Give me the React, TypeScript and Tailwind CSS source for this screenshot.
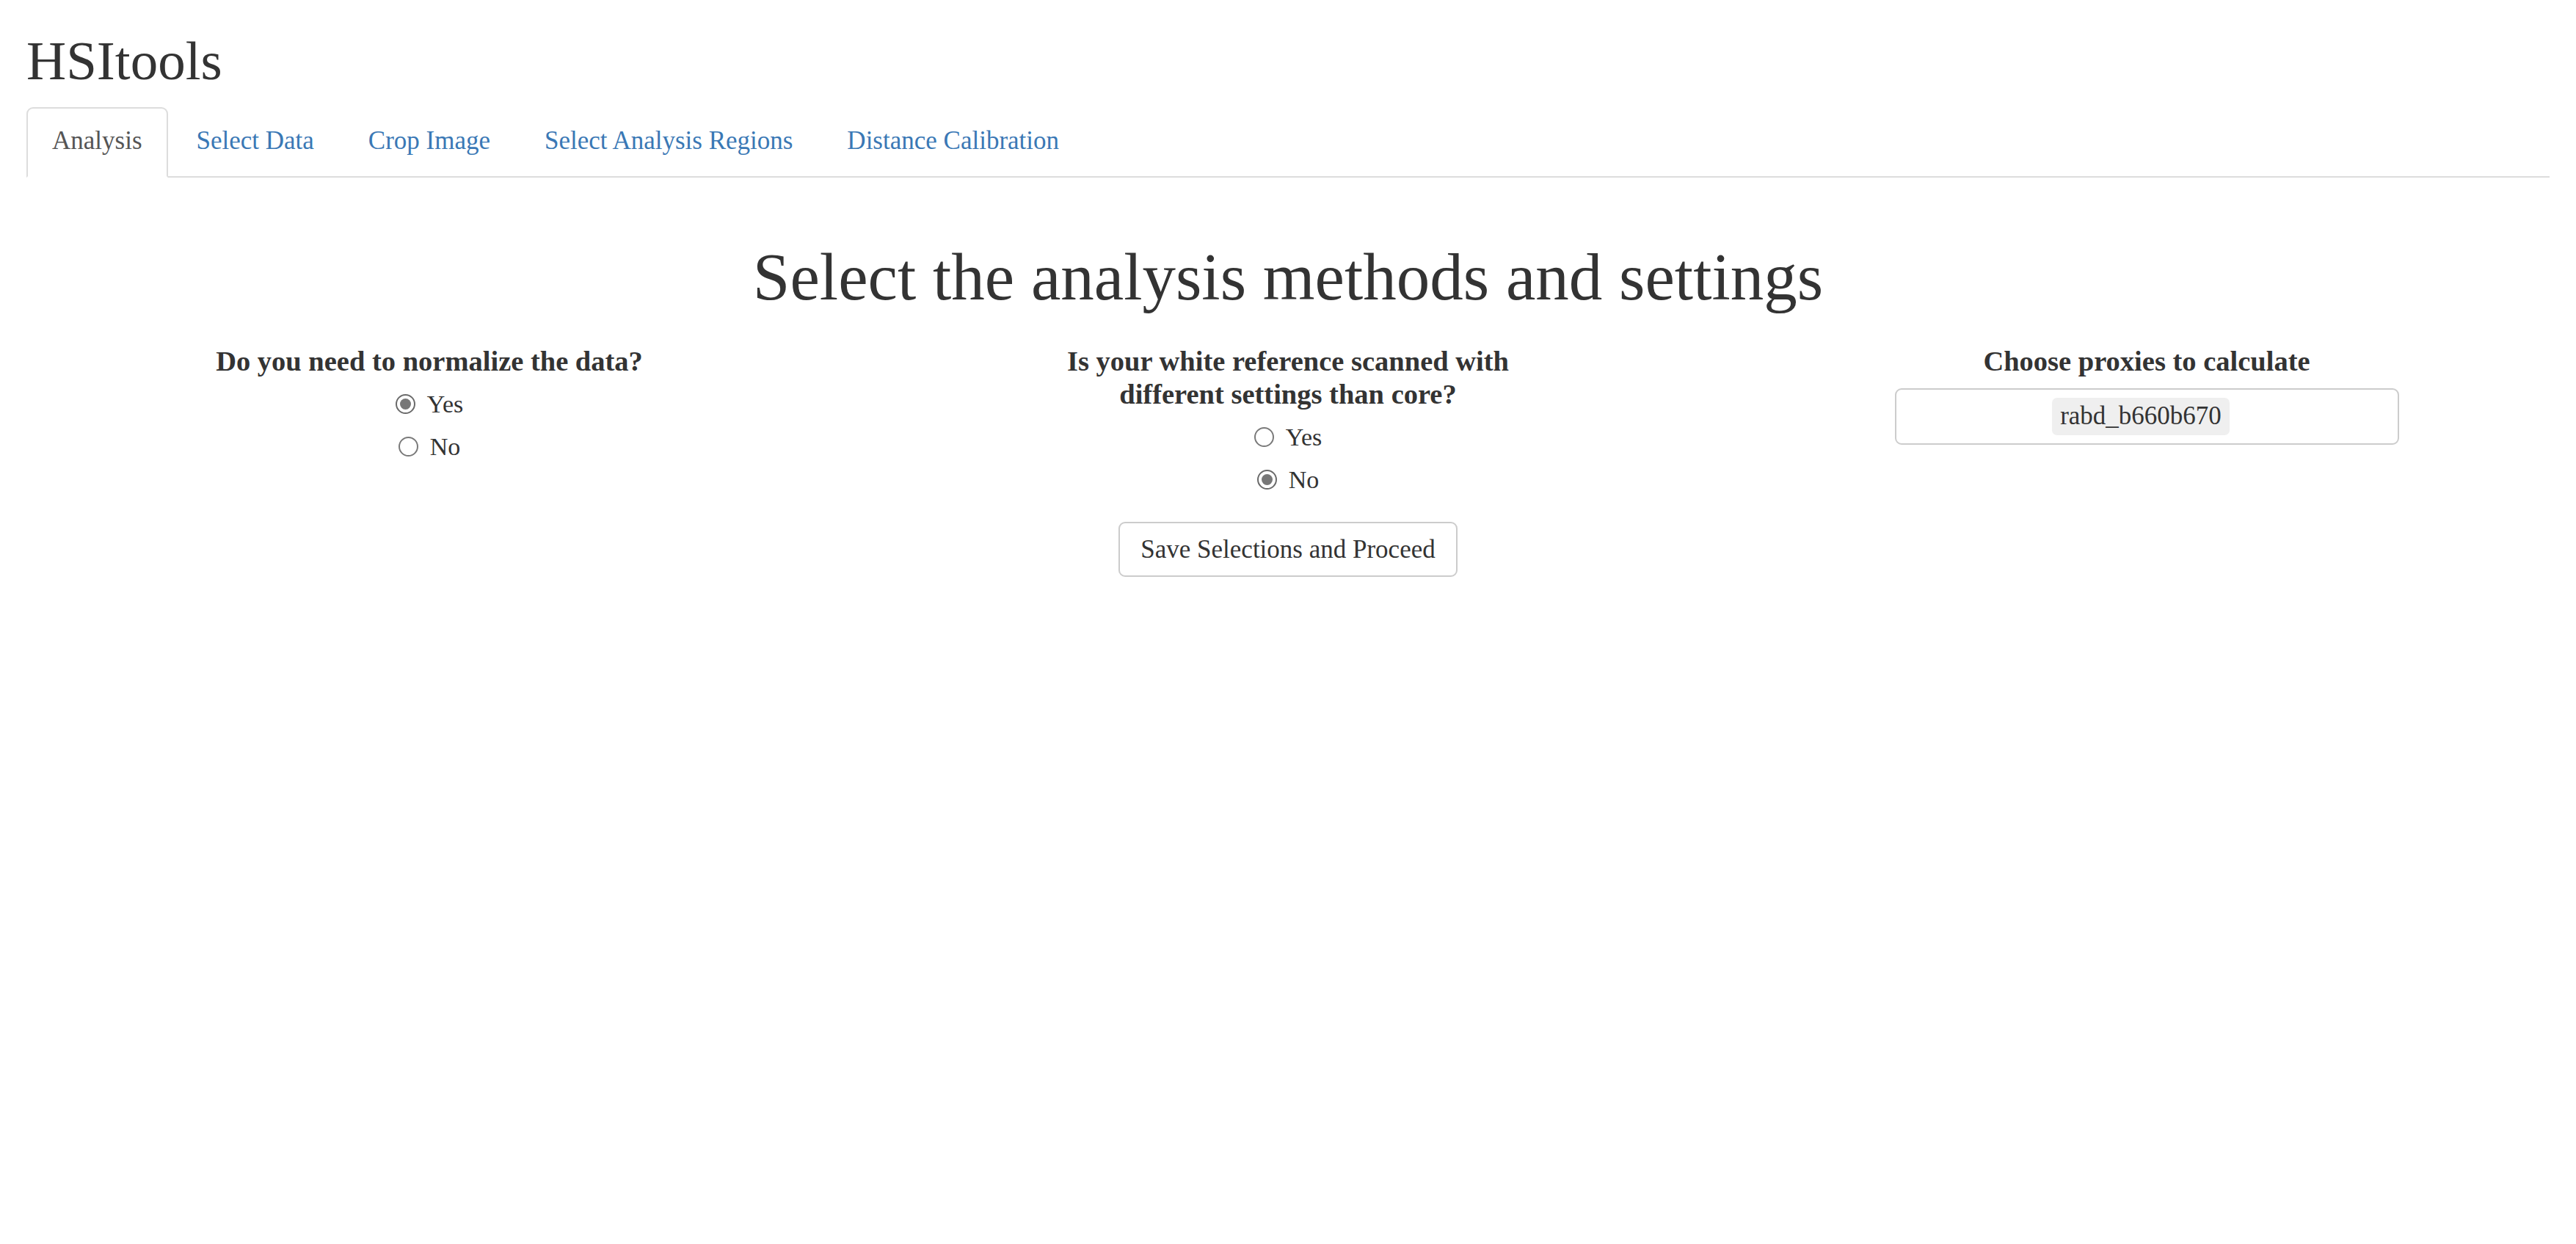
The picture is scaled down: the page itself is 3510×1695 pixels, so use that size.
import { useState } from "react";

const tabs = ["Analysis", "Select Data", "Crop Image", "Select Analysis Regions", "Distance Calibration"];

function Radio({ label, checked, onClick }: { label: string; checked: boolean; onClick: () => void }) {
  return (
    <div className="flex h-[45px] items-center justify-center gap-[16px] cursor-pointer" onClick={onClick}>
      <span
        className={
          "flex h-[27px] w-[27px] items-center justify-center rounded-full border-2 bg-white " +
          (checked ? "border-[#6a6a6a]" : "border-[#7a7a7a]")
        }
      >
        {checked && <span className="h-[15px] w-[15px] rounded-full bg-[#777777]" />}
      </span>
      <span className="text-[34px] leading-[45px]">{label}</span>
    </div>
  );
}

function RadioGroup({ value, setValue }: { value: string; setValue: (v: string) => void }) {
  return (
    <div className="mt-[13px] flex flex-col gap-[13px]">
      <Radio label="Yes" checked={value === "Yes"} onClick={() => setValue("Yes")} />
      <Radio label="No" checked={value === "No"} onClick={() => setValue("No")} />
    </div>
  );
}

export default function App() {
  const [tab, setTab] = useState("Analysis");
  const [normalize, setNormalize] = useState("Yes");
  const [whiteRef, setWhiteRef] = useState("No");

  return (
    <div className="min-h-screen bg-white px-[36px] font-['Liberation_Serif','Times_New_Roman',serif] text-[#333333]">
      <h2 className="mt-[42px] mb-[22px] text-[75px] leading-[82px] font-normal">HSItools</h2>

      {/* tabs */}
      <ul className="flex border-b-2 border-[#dddddd]">
        {tabs.map((t) => (
          <li key={t} className="-mb-[2px] mr-[4px]">
            <a
              href="#"
              onClick={(e) => {
                e.preventDefault();
                setTab(t);
              }}
              className={
                "block rounded-t-[9px] border-2 px-[33px] pt-[20px] pb-[24px] text-[35px] leading-[48px] " +
                (tab === t
                  ? "border-[#dddddd] border-b-white bg-white text-[#555555]"
                  : "border-transparent text-[#3a78b5]")
              }
            >
              {t}
            </a>
          </li>
        ))}
      </ul>

      <div className="-mx-[36px]">
        <h1 className="mt-[86px] text-center text-[91px] leading-[100px] font-normal">
          Select the analysis methods and settings
        </h1>

        <div className="mt-[42px] grid grid-cols-3">
          {/* column 1 */}
          <div className="flex flex-col items-center">
            <label className="text-center text-[38.5px] leading-[45px] font-bold">Do you need to normalize the data?</label>
            <RadioGroup value={normalize} setValue={setNormalize} />
          </div>

          {/* column 2 */}
          <div className="flex flex-col items-center">
            <label className="text-center text-[38.5px] leading-[45px] font-bold">
              Is your white reference scanned with
              <br />
              different settings than core?
            </label>
            <RadioGroup value={whiteRef} setValue={setWhiteRef} />
            <button className="mt-[35px] h-[75px] rounded-[9px] border-2 border-[#cccccc] bg-white px-[28px] text-[35px] leading-[45px] text-[#333333]">
              Save Selections and Proceed
            </button>
          </div>

          {/* column 3 */}
          <div className="flex flex-col items-center">
            <label className="text-center text-[38.5px] leading-[45px] font-bold">Choose proxies to calculate</label>
            <div className="mt-[14px] flex h-[77px] w-[687px] items-center justify-center rounded-[9px] border-2 border-[#cccccc] bg-white pr-[16px]">
              <span className="flex h-[51px] items-center rounded-[7px] bg-[#efefef] px-[11px] text-[35px] text-[#333333]">
                rabd_b660b670
              </span>
            </div>
          </div>
        </div>
      </div>
    </div>
  );
}
